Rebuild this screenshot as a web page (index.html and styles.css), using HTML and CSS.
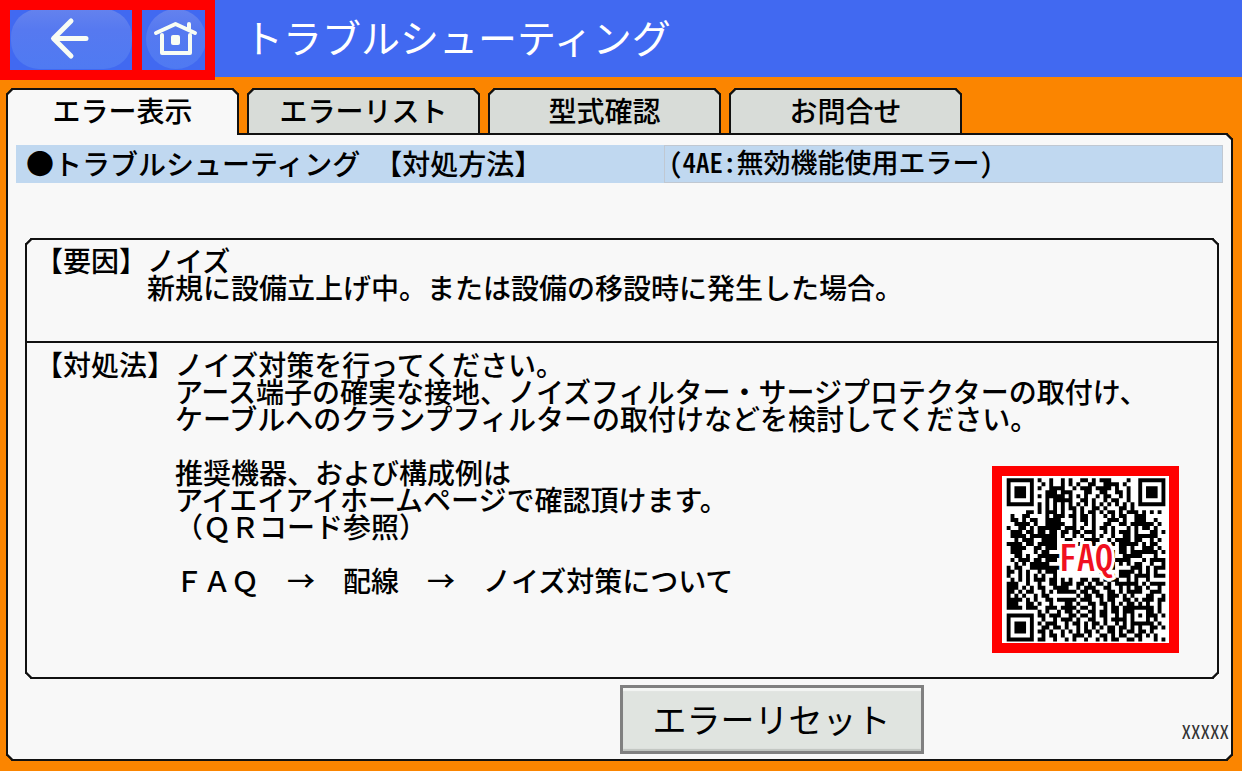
FILE: index.html
```html
<!DOCTYPE html>
<html lang="ja">
<head>
<meta charset="utf-8">
<title>トラブルシューティング</title>
<link rel="stylesheet" href="styles.css">
</head>
<body>
<header class="header">
  <nav class="nav">
    <button class="nav-btn nav-back" aria-label="戻る">
      <svg width="122" height="60" viewBox="0 0 122 60"><defs><linearGradient id="shade" x2="0" y2="1"><stop offset="0" stop-color="#6482ee"/><stop offset=".35" stop-color="#5679f0"/><stop offset="1" stop-color="#4f7af2"/></linearGradient></defs><rect fill="url(#shade)" x="1" y="-1" width="121" height="60" rx="28"/><path class="stroke" d="M76 28.500H44M61 11L43.500 28.500L61 46"/></svg>
    </button>
    <button class="nav-btn nav-home" aria-label="ホーム">
      <svg width="63" height="60" viewBox="0 0 63 60"><circle fill="url(#shade)" cx="34" cy="29" r="30"/><path class="stroke thin" d="M20 25V43H48V25M14 23L33.500 14L53 23M47 19V14"/><rect class="fill" x="29" y="25" width="9" height="10" rx="2"/></svg>
    </button>
  </nav>
  <h1 class="title">トラブルシューティング</h1>
</header>
<main class="main">
  <div class="tabs" role="tablist">
    <button class="tab active" role="tab" aria-selected="true">エラー表示</button>
    <button class="tab" role="tab">エラーリスト</button>
    <button class="tab" role="tab">型式確認</button>
    <button class="tab" role="tab">お問合せ</button>
  </div>
  <section class="panel">
    <div class="bar">
      <h2 class="bar-title"><span>●トラブルシューティング</span><span>【対処方法】</span></h2>
      <div class="bar-error">(4AE:無効機能使用エラー)</div>
    </div>
    <div class="box">
      <div class="cause">
        <div class="label">【要因】</div>
        <p>ノイズ<br>新規に設備立上げ中。または設備の移設時に発生した場合。</p>
      </div>
      <div class="remedy">
        <div class="label">【対処法】</div>
        <div class="remedy-body">
          <p>ノイズ対策を行ってください。<br>アース端子の確実な接地、ノイズフィルター・サージプロテクターの取付け、<br>ケーブルへのクランプフィルターの取付けなどを検討してください。</p>
          <div class="reference">
            <div>
              <p>推奨機器、および構成例は<br>アイエイアイホームページで確認頂けます。<br>（ＱＲコード参照）</p>
              <p>ＦＡＱ　→　配線　→　ノイズ対策について</p>
            </div>
            <svg class="qr" viewBox="0 0 167 167" role="img" aria-label="FAQ">
              <path id="modules" transform="translate(4.700 2.300) scale(3.870 3.980)"/>
              <text class="qr-text" x="84" y="95" text-anchor="middle">FAQ</text>
            </svg>
          </div>
        </div>
      </div>
    </div>
    <footer class="footer">
      <button class="reset">エラーリセット</button>
      <span class="code">XXXXX</span>
    </footer>
  </section>
</main>
<script src="qr.js"></script>
</body>
</html>
```
FILE: styles.css
```css
* { box-sizing: border-box; }
body {
  margin: 0;
  min-height: 100vh;
  display: flex;
  flex-direction: column;
  background: #fb8500;
  color: #000;
  font-family: "Noto Sans CJK JP", sans-serif;
  font-size: 28px;
  font-weight: 500;
  line-height: 27px;
  text-spacing-trim: space-all;
}
button { font: inherit; color: inherit; padding: 0; }
h1, h2, p { margin: 0; font-weight: inherit; }
.header {
  display: flex;
  align-items: flex-start;
  height: 77px;
  background: #4169f1;
}
.nav {
  display: flex;
  gap: 10px;
  padding: 10px;
  background: #f00;
}
.nav-btn {
  border: 0;
  height: 60px;
  background: #4169f1;
}
.nav-btn svg { display: block; }
.stroke { fill: none; stroke: #f8fcf4; stroke-width: 5; stroke-linecap: round; stroke-linejoin: round; }
.stroke.thin { stroke-width: 4; }
.fill { fill: #f8fcf4; }
.title {
  padding-left: 29px;
  color: #fff;
  font-size: 39px;
  font-weight: 400;
  line-height: 72px;
}
.main {
  flex: 1;
  display: flex;
  flex-direction: column;
  padding: 11px 9px 10px 6px;
}
.tabs { display: flex; gap: 8px; }
.tab {
  width: 233px;
  height: 45px;
  padding-bottom: 3px;
  border: 2px solid #111;
  border-bottom: 0;
  border-radius: 6px 6px 0 0;
  corner-shape: bevel;
  background: #d8dcd8;
}
.tab.active {
  height: 47px;
  margin-bottom: -2px;
  padding-bottom: 5px;
  background: #f8f8f8;
  z-index: 1;
}
.panel {
  flex: 1;
  display: flex;
  flex-direction: column;
  padding: 10px 8px 0;
  border: 2px solid #111;
  border-radius: 0 6px 6px 6px;
  corner-shape: bevel;
  background: #f8f8f8;
}
.bar {
  display: flex;
  height: 38px;
  background: #c0d8f0;
}
.bar-title {
  width: 648px;
  display: flex;
  gap: 14px;
  padding-left: 10px;
  font-size: 28px;
  line-height: 36px;
}
.bar-error {
  flex: 1;
  padding-left: 4px;
  border: 1px solid #c0c8d2;
  font-size: 27px;
  line-height: 32px;
  font-feature-settings: "hwid";
}
.box {
  margin: 55px 4px 0 9px;
  border: 2px solid #111;
  border-radius: 6px;
  corner-shape: bevel;
}
.cause, .remedy { display: flex; padding: 8px 8px 0; }
.cause { height: 103px; padding-top: 7px; border-bottom: 2px solid #111; }
.remedy { height: 334px; }
.label { white-space: nowrap; }
.remedy-body { flex: 1; }
.reference {
  display: flex;
  justify-content: space-between;
  align-items: flex-start;
  padding: 27px 30px 0 0;
}
.reference p + p { margin-top: 27px; }
.qr {
  width: 187px;
  height: 187px;
  margin-top: 7px;
  border: 10px solid #f00;
  background: #fff;
}
.qr-text {
  fill: #f01020;
  stroke: #fff;
  stroke-width: 6px;
  paint-order: stroke;
  font-size: 36px;
  font-weight: 500;
  font-feature-settings: "hwid";
}
.footer {
  display: flex;
  justify-content: space-between;
  padding: 6px 0 0 50%;
  margin-right: -6px;
}
.reset {
  width: 304px;
  height: 69px;
  padding-bottom: 3px;
  border: 3px solid #808080;
  background: #e0e4e0;
  box-shadow: inset 0 3px 1px #f4f6f4, inset 0 -2px 1px #c0c4c0;
  font-size: 34px;
  font-weight: 400;
}
.code {
  margin-top: 32px;
  color: #333;
  font-size: 19px;
  font-weight: 400;
  font-feature-settings: "hwid";
}
```
FILE: qr.js
```js
const rows = [
  '#######.#..#..#.#..##.#.###....#..#######',
  '#.....#..#.#..#.#.#..##..####.#...#.....#',
  '#.###.#.#..####..#.###.####.#..#..#.###.#',
  '#.###.#...###.###...##..##..##.#..#.###.#',
  '#.###.#.#.#####.#.#.#..#.##..#.#..#.###.#',
  '#.....#...#.#####..##.#..#.##..#..#.....#',
  '#######.#.#.#.#.#.#.#.#.#.#.#.#.#.#######',
  '........#.#.#.#.##.#..##.#...##.#........',
  '.....##.#.###.#..#.#.##.#.##.#.###.#.#.#.',
  '.#..##....#.###.##.##.#..#.#.##..###.....',
  '.##.#.##..####...#.##.#...###.#..###..#..',
  '..####.#..#####..#..#.#..##..##.######.#.',
  '#..##.#.######.###.#..#.##.#...#.#.##.#..',
  '.###.##.##.##.##.##.###..#.#.###.#...##.#',
  '.####.#######.#..#.#..#.#..#..##.######..',
  '..#.###..####..##...####..#.####.##..#.#.',
  '####.##.#####..#.##.#.#.#..#.#####.#.##..',
  '.####..##.###.............#..##.#..###.#.',
  '.###...#.##...............##.##.#######.#',
  '..##.#..######.............#..#####...#..',
  '.#.###.##.###.............#.####...#.####',
  '..#.#.#####.............#..#.#.#.##..#..#',
  '#.##..########..........##.#....###.#.###',
  '##.#.#..#.###...........#....####.#.#.#..',
  '#..#.#.#.#..#..............#.###.####.###',
  '.#.#.#.###.##.#.#..##.##.#.##..#.#..#....',
  '###..#..#..##.###.##.#.##.#.######.#.####',
  '###.#.#.##..####..#.###..##..#.#.##.#..#.',
  '##.#.##..#.#.#####.##.##..##.#.####..###.',
  '#.#.#..#.##.......#.##.##.###.#.#...##..#',
  '####.#.#..##.#####.###..#.##..##.#.###.##',
  '###..##.#..#...##.#..##.##.#.#.##.#.#..#.',
  '####.###..###.####.##.#..#.##.########.#.',
  '........#.#..#.##.#..##.##.##.###...##.#.',
  '#######.##.###..##.##.#.##..#.#.#.#.###.#',
  '#.....#..#..#.###.#..##..#.####.#...#.#..',
  '#.###.#.#.###..#.##.#.##.#..#.#.######.#.',
  '#.###.#..##.##.#..#.#.#.#.##.##.#.#..##.#',
  '#.###.#.##.#..#.#.#.##.#..##.#.##.##.#...',
  '#.....#..#.##.#..###.#..##.#.##..##.#.#..',
  '#######.##..#..#.#..#..#.#.##..##.#...#.#'
];
let d = '';
rows.forEach((row, y) => {
  for (const run of row.matchAll(/#+/g)) {
    d += `M${run.index} ${y}h${run[0].length}v1h-${run[0].length}z`;
  }
});
document.getElementById('modules').setAttribute('d', d);
```
